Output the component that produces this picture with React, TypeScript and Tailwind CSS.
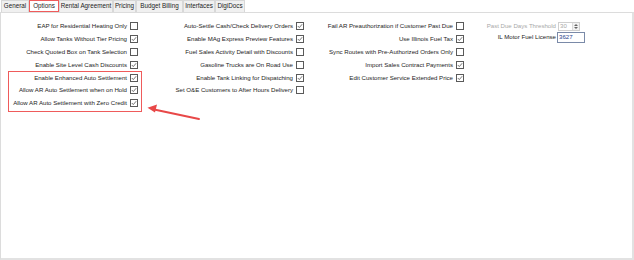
import React from 'react';

const col1 = [
  { label: 'EAP for Residential Heating Only', checked: false },
  { label: 'Allow Tanks Without Tier Pricing', checked: true },
  { label: 'Check Quoted Box on Tank Selection', checked: false },
  { label: 'Enable Site Level Cash Discounts', checked: true },
  { label: 'Enable Enhanced Auto Settlement', checked: true },
  { label: 'Allow AR Auto Settlement when on Hold', checked: true },
  { label: 'Allow AR Auto Settlement with Zero Credit', checked: true },
];

const col2 = [
  { label: 'Auto-Settle Cash/Check Delivery Orders', checked: true },
  { label: 'Enable MAg Express Preview Features', checked: true },
  { label: 'Fuel Sales Activity Detail with Discounts', checked: false },
  { label: 'Gasoline Trucks are On Road Use', checked: false },
  { label: 'Enable Tank Linking for Dispatching', checked: true },
  { label: 'Set O&E Customers to After Hours Delivery', checked: false },
];

const col3 = [
  { label: 'Fail AR Preauthorization if Customer Past Due', checked: false },
  { label: 'Use Illinois Fuel Tax', checked: true },
  { label: 'Sync Routes with Pre-Authorized Orders Only', checked: false },
  { label: 'Import Sales Contract Payments', checked: true },
  { label: 'Edit Customer Service Extended Price', checked: true },
];

const tabs = [
  { name: 'General', w: 'w-[28px]' },
  { name: 'Options', w: 'w-[30px]' },
  { name: 'Rental Agreement', w: 'w-[54px]' },
  { name: 'Pricing', w: 'w-[23px]' },
  { name: 'Budget Billing', w: 'w-[47px]' },
  { name: 'Interfaces', w: 'w-[32px]' },
  { name: 'DigiDocs', w: 'w-[30px]' },
];

const Checkbox: React.FC<{ checked: boolean }> = ({ checked }) => (
  <span className="flex w-[8px] h-[8px] shrink-0 border border-[#5a5a5a] bg-white">
    {checked && (
      <svg viewBox="0 0 6 6" className="w-full h-full">
        <polyline points="0.8,3 2.3,4.6 5.2,1.2" fill="none" stroke="#555" strokeWidth="0.8" />
      </svg>
    )}
  </span>
);

const Row: React.FC<{ label: string; checked: boolean }> = ({ label, checked }) => (
  <div className="flex justify-end items-center h-[12.8px] gap-[3px] whitespace-nowrap">
    <span>{label}</span>
    <Checkbox checked={checked} />
  </div>
);

export default function App() {
  return (
    <div className="relative w-[634px] h-[260px] bg-white text-[6.1px] leading-none text-[#1c1c1c] font-['Liberation_Sans',Arial,sans-serif]">
      <div className="flex h-[12px] pl-[1px] text-[6.3px]">
        {tabs.map(t => (
          <div
            key={t.name}
            className={
              t.name === 'Options'
                ? `${t.w} flex items-center justify-center bg-white border-[1.5px] border-[#ef5b5b] whitespace-nowrap`
                : `${t.w} flex items-center justify-center bg-[#f0f0f0] border border-b-0 border-[#d8d8d8] whitespace-nowrap`
            }
          >
            {t.name}
          </div>
        ))}
      </div>

      <div className="w-[634px] h-[248px] border-l border-t border-[#dcdcdc] border-r-2 border-b-2 border-r-[#e2e2e2] border-b-[#e2e2e2] pt-[7px]">
        <div className="flex">
          <div className="w-[137px] flex flex-col">
            {col1.map(r => <Row key={r.label} {...r} />)}
          </div>
          <div className="w-[166px] flex flex-col">
            {col2.map(r => <Row key={r.label} {...r} />)}
          </div>
          <div className="w-[160px] flex flex-col">
            {col3.map(r => <Row key={r.label} {...r} />)}
          </div>
          <div className="flex flex-col pt-[2px]">
            <div className="flex items-center h-[9px]">
              <span className="w-[92px] text-right text-[#a8a8a8] whitespace-nowrap">Past Due Days Threshold</span>
              <div className="ml-[2px] flex h-[9px] w-[22px] border border-[#cfcfcf]">
                <span className="flex-1 pl-[1px] flex items-center text-[#a8a8a8]">30</span>
                <span className="w-[7px] flex flex-col items-center justify-center gap-[1px] border-l border-[#dcdcdc] bg-[#f2f2f2]">
                  <svg viewBox="0 0 4 2" className="w-[4px] h-[2px]"><polygon points="0,2 4,2 2,0" fill="#666" /></svg>
                  <svg viewBox="0 0 4 2" className="w-[4px] h-[2px]"><polygon points="0,0 4,0 2,2" fill="#666" /></svg>
                </span>
              </div>
            </div>
            <div className="flex items-center h-[11px] mt-[1px]">
              <span className="w-[92px] text-right whitespace-nowrap">IL Motor Fuel License</span>
              <div className="ml-[1px] flex items-center h-[11px] w-[28px] border border-[#7a8aa8] pl-[1px] text-[#2b3f8c]">
                3627
              </div>
            </div>
          </div>
        </div>
      </div>

      {/* annotation: highlight box + arrow */}
      <div className="absolute left-[7.5px] top-[70.5px] w-[134px] h-[41.5px] border-[1.5px] border-[#ef5b5b]" />
      <svg className="absolute left-0 top-0" width="634" height="260">
        <line x1="199" y1="119" x2="153" y2="109.3" stroke="#e84848" strokeWidth="2" strokeLinecap="round" />
        <polygon points="147.5,107.8 157,104.5 155,112.5" fill="#e84848" />
      </svg>
    </div>
  );
}
